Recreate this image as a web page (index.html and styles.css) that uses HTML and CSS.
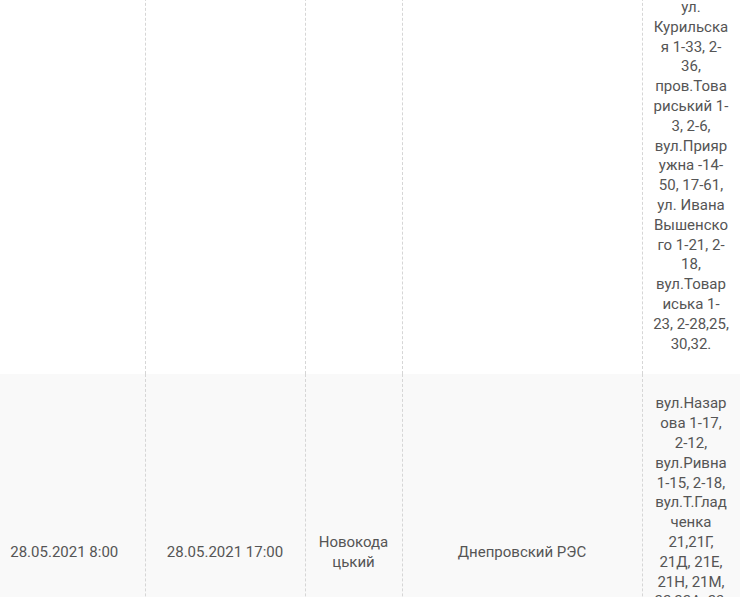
FILE: index.html
```html
<!DOCTYPE html>
<html lang="uk">
<head>
  <meta charset="UTF-8">
  <meta name="viewport" content="width=device-width, initial-scale=1.0">
  <title>Графік відключень</title>
  <link rel="stylesheet" href="styles.css">
</head>
<body>
  <div class="tabella-wrap">
    <table class="tabella">
      <colgroup>
        <col class="col-inizio">
        <col class="col-fine">
        <col class="col-citta">
        <col class="col-res">
        <col class="col-indirizzi">
      </colgroup>
      <tbody>
        <tr>
          <td></td>
          <td></td>
          <td></td>
          <td></td>
          <td>ул. Курильская 1-33, 2-36, пров.Товариський 1-3, 2-6, вул.Прияружна -14-50, 17-61, ул. Ивана Вышенского 1-21, 2-18, вул.Товариська 1-23, 2-28,25, 30,32.</td>
        </tr>
        <tr>
          <td>28.05.2021 8:00</td>
          <td>28.05.2021 17:00</td>
          <td>Новокодацький</td>
          <td>Днепровский РЭС</td>
          <td>вул.Назарова 1-17, 2-12, вул.Ривна 1-15, 2-18, вул.Т.Гладченка 21,21Г, 21Д, 21Е, 21Н, 21М, 22,22А, 23, 24, 26, вул.Садова 1-25, 2-30, 31, 33, 35, 37, 39.</td>
        </tr>
      </tbody>
    </table>
  </div>
</body>
</html>
```

FILE: styles.css
```css
body {
  margin: 0;
  padding: 0;
  background: #fff;
  font-family: Roboto, "Liberation Sans", sans-serif;
  overflow: hidden;
}

.tabella-wrap {
  overflow: hidden;
}

/* la pagina e' scorsa: la tabella parte un po' fuori vista */
.tabella {
  margin-top: -22px;
  margin-left: -16px;
  width: 756px;
  table-layout: fixed;
  border-collapse: collapse;
  font-size: 15px;
  line-height: 19.8px;
  color: #555;
}

.col-inizio { width: 161px; }
.col-fine { width: 160px; }
.col-citta { width: 97px; }
.col-res { width: 240px; }
.col-indirizzi { width: 98px; }

.tabella td {
  padding: 20px 10px;
  text-align: center;
  vertical-align: middle;
  border-right: 1px dashed #d6d6d6;
  overflow-wrap: break-word;
  word-wrap: break-word;
}

.tabella tr:nth-child(even) td {
  background: #f9f9f9;
}
```
